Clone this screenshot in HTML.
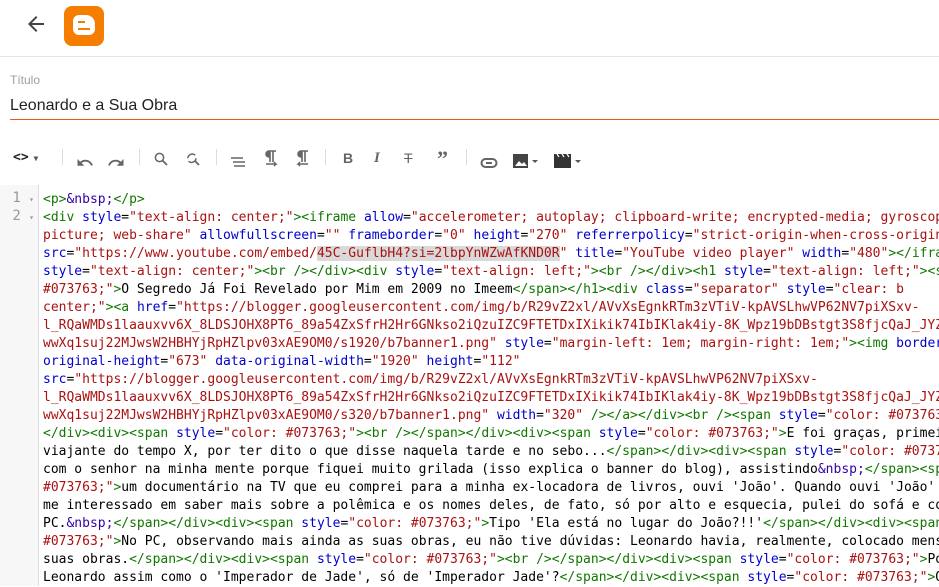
<!DOCTYPE html>
<html><head><meta charset="utf-8"><style>
body{margin:0;width:939px;height:586px;overflow:hidden;background:#fff;font-family:"Liberation Sans",sans-serif;position:relative}
.top{position:absolute;left:0;top:0;width:939px;height:56px;border-bottom:1px solid #e6e6e6}
.logo{position:absolute;left:64px;top:6px;width:40px;height:40px;background:#f57d00;border-radius:8px}
.lbl{position:absolute;left:10px;top:73px;font-size:12px;color:#9e9e9e}
.ttl{position:absolute;left:10px;top:97px;font-size:16px;color:#222}
.uline{position:absolute;left:10px;top:119px;width:929px;height:1px;background:#f4511e}
.tb{position:absolute;top:150px;height:22px;line-height:16px}
.sep{position:absolute;top:149px;width:1px;height:16px;background:#ddd}
.code{position:absolute;left:0;top:185px;width:939px;height:401px}
.gut{position:absolute;left:0;top:0;width:38px;height:401px;background:#f7f7f7;border-right:1px solid #ddd}
.ln{position:absolute;left:0;width:34px;text-align:right;font:14px "DejaVu Sans Mono",monospace;color:#999}
.lines{position:absolute;left:43px;top:6px;font:13px/18px "DejaVu Sans Mono",monospace;color:#000;white-space:pre}
.t{color:#170}.a{color:#00c}.s{color:#a11}.e{color:#30a}
.hl{background:#d9d9d9}
</style></head><body>
<div class="top">
<svg style="position:absolute;left:24px;top:12px" width="24" height="24" viewBox="0 0 24 24"><path d="M20 11H7.83l5.59-5.59L12 4l-8 8 8 8 1.41-1.41L7.83 13H20z" fill="#444"/></svg>
<div class="logo"><div style="position:absolute;left:9px;top:9px;width:22px;height:20px;background:#fff;border-radius:6px 9px 6px 6px"></div><div style="position:absolute;left:14px;top:15px;width:7px;height:2px;background:#f57d00"></div><div style="position:absolute;left:14px;top:22px;width:12px;height:2px;background:#f57d00"></div></div>
</div>
<div class="lbl">Título</div>
<div class="ttl">Leonardo e a Sua Obra</div>
<div class="uline"></div>
<div class="tb" style="left:13px;font:bold 13px 'DejaVu Sans Mono',monospace;color:#222">&lt;&gt;<span style="font-size:8px;color:#555"> ▼</span></div>
<div class="sep" style="left:62px"></div>
<svg class="tb" style="left:76px;top:151px" width="18" height="14" viewBox="0 0 24 18"><path d="M12.5 6c-2.65 0-5.05 1-6.9 2.6L2 5v9h9l-3.62-3.62C8.77 9.22 10.54 8.5 12.5 8.5c3.54 0 6.55 2.31 7.6 5.5l2.37-.78C21.08 9.03 17.15 6 12.5 6z" fill="#666"/></svg>
<svg class="tb" style="left:107px;top:151px" width="18" height="14" viewBox="0 0 24 18"><path d="M18.4 8.6C16.55 7 14.15 6 11.5 6c-4.65 0-8.58 3.03-9.96 7.22L3.9 14c1.05-3.19 4.05-5.5 7.6-5.5 1.95 0 3.73.72 5.12 1.88L13 14h9V5z" fill="#666"/></svg>
<div class="sep" style="left:139px"></div>
<svg class="tb" style="left:152px;top:148px" width="18" height="18" viewBox="0 0 24 24"><circle cx="10" cy="10" r="5.5" fill="none" stroke="#666" stroke-width="2"/><path d="M14 14l6 6" stroke="#666" stroke-width="2.4"/></svg>
<svg class="tb" style="left:184px;top:148px" width="18" height="18" viewBox="0 0 24 24"><path d="M5 11a6 6 0 0 1 10-4M16 11a6 6 0 0 1-10 4" fill="none" stroke="#666" stroke-width="2"/><path d="M14 14l6 6" stroke="#666" stroke-width="2.4"/></svg>
<div class="sep" style="left:216px"></div>
<svg class="tb" style="left:230px;top:151px" width="16" height="14" viewBox="0 0 16 14"><path d="M1 3h12M3 7h12M4 11h11" stroke="#666" stroke-width="1.6"/></svg>
<svg class="tb" style="left:263px;top:148px" width="16" height="18" viewBox="0 0 16 18"><path d="M6 1h7M6 1a3 3 0 0 0 0 6h1V1M7 1v11M10 1v11" fill="#666" stroke="#666" stroke-width="1.6"/><path d="M3 14h10l-2-2M13 14l-2 2" fill="none" stroke="#666" stroke-width="1.4"/></svg>
<svg class="tb" style="left:295px;top:148px" width="16" height="18" viewBox="0 0 16 18"><path d="M6 1h7M6 1a3 3 0 0 0 0 6h1V1M7 1v11M10 1v11" fill="#666" stroke="#666" stroke-width="1.6"/><path d="M13 14H3l2-2M3 14l2 2" fill="none" stroke="#666" stroke-width="1.4"/></svg>
<div class="sep" style="left:325px"></div>
<div class="tb" style="left:343px;font:bold 14px/16px 'Liberation Sans';color:#666">B</div>
<div class="tb" style="left:374px;font:italic bold 15px/16px 'Liberation Serif';color:#666">I</div>
<div class="tb" style="left:404px;font:14px/16px 'Liberation Sans';color:#666;text-decoration:line-through">T</div>
<div class="tb" style="left:437px;top:148px;font:bold 22px/22px 'Liberation Serif';color:#666">”</div>
<div class="sep" style="left:466px"></div>
<svg class="tb" style="left:480px;top:152px" width="18" height="12" viewBox="0 0 18 12"><rect x="1.5" y="2" width="15" height="8" rx="4" fill="none" stroke="#666" stroke-width="2"/><path d="M6 6h6" stroke="#666" stroke-width="2"/></svg>
<svg class="tb" style="left:513px;top:150px" width="28" height="16" viewBox="0 0 28 16"><rect x="0" y="1" width="15" height="14" fill="#444"/><path d="M2 13l4-5 3 3 2-2 3 4z" fill="#fff"/><path d="M19 7h6l-3 3z" fill="#555"/></svg>
<svg class="tb" style="left:554px;top:150px" width="28" height="16" viewBox="0 0 28 16"><rect x="0" y="4" width="17" height="11" fill="#333"/><path d="M0 1h17v3H0z" fill="#333"/><path d="M3 1l2 3M8 1l2 3M13 1l2 3" stroke="#fff" stroke-width="1.2"/><path d="M21 7h6l-3 3z" fill="#555"/></svg>
<div class="code">
<div class="gut"><div class="ln" style="top:5px">1 <span style="font-size:8px">▾</span></div><div class="ln" style="top:23px">2 <span style="font-size:8px">▾</span></div></div>
<div class="lines"><span class="t">&lt;p&gt;</span><span class="e">&amp;nbsp;</span><span class="t">&lt;/p&gt;</span>
<span class="t">&lt;div</span> <span class="a">style</span>=<span class="s">"text-align: center;"</span><span class="t">&gt;&lt;iframe</span> <span class="a">allow</span>=<span class="s">"accelerometer; autoplay; clipboard-write; encrypted-media; gyroscop</span>
<span class="s">picture; web-share"</span> <span class="a">allowfullscreen</span>=<span class="s">""</span> <span class="a">frameborder</span>=<span class="s">"0"</span> <span class="a">height</span>=<span class="s">"270"</span> <span class="a">referrerpolicy</span>=<span class="s">"strict-origin-when-cross-origin</span>
<span class="a">src</span>=<span class="s">"https://www.youtube.com/embed/<span class="hl">45C-GuflbH4?si=2lbpYnWZwAfKND0R</span>"</span> <span class="a">title</span>=<span class="s">"YouTube video player"</span> <span class="a">width</span>=<span class="s">"480"</span><span class="t">&gt;&lt;/ifra</span>
<span class="a">style</span>=<span class="s">"text-align: center;"</span><span class="t">&gt;&lt;br /&gt;&lt;/div&gt;&lt;div</span> <span class="a">style</span>=<span class="s">"text-align: left;"</span><span class="t">&gt;&lt;br /&gt;&lt;/div&gt;&lt;h1</span> <span class="a">style</span>=<span class="s">"text-align: left;"</span><span class="t">&gt;&lt;s</span>
<span class="s">#073763;"</span><span class="t">&gt;</span>O Segredo Já Foi Revelado por Mim em 2009 no Imeem<span class="t">&lt;/span&gt;&lt;/h1&gt;&lt;div</span> <span class="a">class</span>=<span class="s">"separator"</span> <span class="a">style</span>=<span class="s">"clear: b</span>
<span class="s">center;"</span><span class="t">&gt;&lt;a</span> <span class="a">href</span>=<span class="s">"https://blogger.googleusercontent.com/img/b/R29vZ2xl/AVvXsEgnkRTm3zVTiV-kpAVSLhwVP62NV7piXSxv-</span>
<span class="s">l_RQaWMDs1laauxvv6X_8LDSJOHX8PT6_89a54ZxSfrH2Hr6GNkso2iQzuIZC9FTETDxIXikik74IbIKlak4iy-8K_Wpz19bDBstgt3S8fjcQaJ_JYZ</span>
<span class="s">wwXq1suj22MJwsW2HBHYjRpHZlpv03xAE9OM0/s1920/b7banner1.png"</span> <span class="a">style</span>=<span class="s">"margin-left: 1em; margin-right: 1em;"</span><span class="t">&gt;&lt;img</span> <span class="a">border</span>
<span class="a">original-height</span>=<span class="s">"673"</span> <span class="a">data-original-width</span>=<span class="s">"1920"</span> <span class="a">height</span>=<span class="s">"112"</span>
<span class="a">src</span>=<span class="s">"https://blogger.googleusercontent.com/img/b/R29vZ2xl/AVvXsEgnkRTm3zVTiV-kpAVSLhwVP62NV7piXSxv-</span>
<span class="s">l_RQaWMDs1laauxvv6X_8LDSJOHX8PT6_89a54ZxSfrH2Hr6GNkso2iQzuIZC9FTETDxIXikik74IbIKlak4iy-8K_Wpz19bDBstgt3S8fjcQaJ_JYZ</span>
<span class="s">wwXq1suj22MJwsW2HBHYjRpHZlpv03xAE9OM0/s320/b7banner1.png"</span> <span class="a">width</span>=<span class="s">"320"</span> <span class="t">/&gt;&lt;/a&gt;&lt;/div&gt;&lt;br /&gt;&lt;span</span> <span class="a">style</span>=<span class="s">"color: #073763</span>
<span class="t">&lt;/div&gt;&lt;div&gt;&lt;span</span> <span class="a">style</span>=<span class="s">"color: #073763;"</span><span class="t">&gt;&lt;br /&gt;&lt;/span&gt;&lt;/div&gt;&lt;div&gt;&lt;span</span> <span class="a">style</span>=<span class="s">"color: #073763;"</span><span class="t">&gt;</span>E foi graças, primei
viajante do tempo X, por ter dito o que disse naquela tarde e no sebo...<span class="t">&lt;/span&gt;&lt;/div&gt;&lt;div&gt;&lt;span</span> <span class="a">style</span>=<span class="s">"color: #0737</span>
com o senhor na minha mente porque fiquei muito grilada (isso explica o banner do blog), assistindo<span class="e">&amp;nbsp;</span><span class="t">&lt;/span&gt;&lt;span</span>
<span class="s">#073763;"</span><span class="t">&gt;</span>um documentário na TV que eu comprei para a minha ex-locadora de livros, ouvi 'João'. Quando ouvi 'João'
me interessado em saber mais sobre a polêmica e os nomes deles, de fato, só por alto e esquecia, pulei do sofá e co
PC.<span class="e">&amp;nbsp;</span><span class="t">&lt;/span&gt;&lt;/div&gt;&lt;div&gt;&lt;span</span> <span class="a">style</span>=<span class="s">"color: #073763;"</span><span class="t">&gt;</span>Tipo 'Ela está no lugar do João?!!'<span class="t">&lt;/span&gt;&lt;/div&gt;&lt;div&gt;&lt;span</span>
<span class="s">#073763;"</span><span class="t">&gt;</span>No PC, observando mais ainda as suas obras, eu não tive dúvidas: Leonardo havia, realmente, colocado mens
suas obras.<span class="t">&lt;/span&gt;&lt;/div&gt;&lt;div&gt;&lt;span</span> <span class="a">style</span>=<span class="s">"color: #073763;"</span><span class="t">&gt;&lt;br /&gt;&lt;/span&gt;&lt;/div&gt;&lt;div&gt;&lt;span</span> <span class="a">style</span>=<span class="s">"color: #073763;"</span><span class="t">&gt;</span>Po
Leonardo assim como o 'Imperador de Jade', só de 'Imperador Jade'?<span class="t">&lt;/span&gt;&lt;/div&gt;&lt;div&gt;&lt;span</span> <span class="a">style</span>=<span class="s">"color: #073763;"</span><span class="t">&gt;</span>O</div>
</div>
</body></html>
